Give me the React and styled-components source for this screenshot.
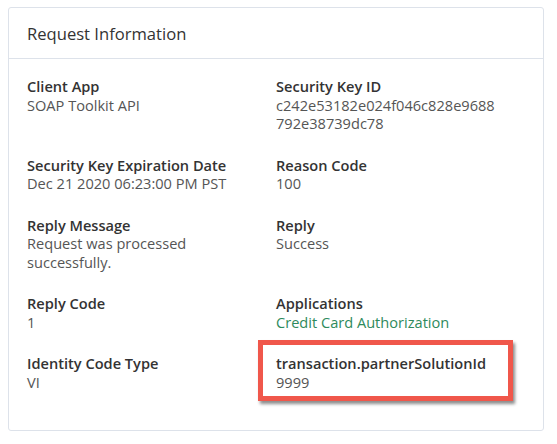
import React from "react";
import styled, { createGlobalStyle } from "styled-components";

const GlobalStyle = createGlobalStyle`
  body {
    margin: 0;
    background: #ffffff;
    font-family: "Open Sans", "Noto Sans", sans-serif;
  }
`;

const fields = [
  { label: "Client App", value: "SOAP Toolkit API" },
  { label: "Security Key ID", value: "c242e53182e024f046c828e9688 792e38739dc78" },
  { label: "Security Key Expiration Date", value: "Dec 21 2020 06:23:00 PM PST" },
  { label: "Reason Code", value: "100" },
  { label: "Reply Message", value: "Request was processed successfully." },
  { label: "Reply", value: "Success" },
  { label: "Reply Code", value: "1" },
  { label: "Applications", value: "Credit Card Authorization", link: true },
  { label: "Identity Code Type", value: "VI" },
  { label: "transaction.partnerSolutionId", value: "9999", highlight: true },
];

export default function App() {
  return (
    <>
      <GlobalStyle />
      <Card>
        <Header>Request Information</Header>
        <Body>
          {fields.map((f) => (
            <Field key={f.label} $highlight={f.highlight}>
              <Label>{f.label}</Label>
              <Value $link={f.link}>{f.value}</Value>
            </Field>
          ))}
        </Body>
      </Card>
    </>
  );
}

const Card = styled.section`
  margin: 7px 0 0 8px;
  width: 536px;
  box-sizing: border-box;
  border: 1px solid #dde2ea;
  border-radius: 3px;
  background: #fff;
`;

const Header = styled.h2`
  margin: 0;
  height: 51px;
  box-sizing: border-box;
  padding: 1px 18px 0;
  display: flex;
  align-items: center;
  border-bottom: 1px solid #dde2ea;
  font-size: 16.6px;
  font-weight: 400;
  color: #333;
`;

const Body = styled.div`
  display: grid;
  grid-template-columns: 249px 1fr;
  row-gap: 23px;
  padding: 18px 18px 39px;
`;

const Field = styled.div`
  position: relative;
  font-size: 14.6px;
  line-height: 18.5px;
  ${(p) =>
    p.$highlight &&
    `
    &::after {
      content: "";
      position: absolute;
      left: -18px;
      top: -14px;
      width: 255px;
      height: 61px;
      box-sizing: border-box;
      border: 5px solid #f0574b;
      box-shadow: 2px 3px 3px rgba(0, 0, 0, 0.45);
      pointer-events: none;
    }
  `}
`;

const Label = styled.div`
  font-weight: 600;
  color: #333;
`;

const Value = styled.div`
  color: ${(p) => (p.$link ? "#2e8a5c" : "#555")};
  max-width: 228px;
  word-break: break-word;
`;
